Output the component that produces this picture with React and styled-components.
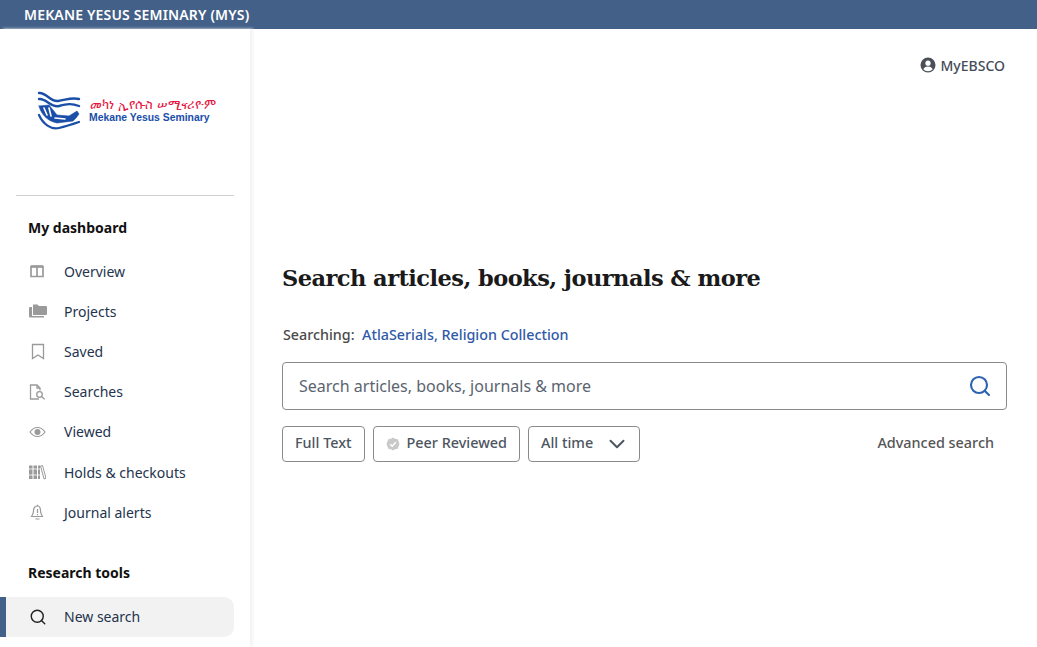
import React from "react";
import styled, { createGlobalStyle } from "styled-components";
import { Search, ChevronDown } from "lucide-react";

const Global = createGlobalStyle`
  html, body { margin: 0; padding: 0; height: 100%; overflow: hidden; background: #fff; }
  * { box-sizing: border-box; }
  body { font-family: "Noto Sans", "Open Sans", sans-serif; color: #1a1a1a; }
`;
const Page = styled.div`display: flex; flex-direction: column; width: 1037px; height: 647px; overflow: hidden;`;
const TopBar = styled.header`
  height: 29px; flex: none; background: #436088; color: #fff; font-size: 14px; font-weight: 600;
  line-height: 29px; padding-left: 24px; letter-spacing: 0.16px;
`;
const Body = styled.div`display: flex; flex: 1; min-height: 0;`;
const Sidebar = styled.aside`
  width: 250px; flex: none; background: #fff; box-shadow: 3px 0 3px #f3f3f3;
`;
const LogoBox = styled.div`
  margin: 0 16px; height: 167px; border-bottom: 1px solid #d2d2d2; padding: 62px 0 0 21px;
`;
const LogoRow = styled.div`display: flex; align-items: center; gap: 8px;`;
const LogoText = styled.div`display: flex; flex-direction: column; align-items: flex-start; margin-top: -2px;`;
const Amharic = styled.span`
  color: #e5173f; font-family: "DejaVu Sans", "Noto Sans", sans-serif; font-size: 12.7px; line-height: 15px; margin-left: 1px; white-space: nowrap;
`;
const Latin = styled.span`
  color: #1a4ea8; font-family: "Liberation Sans", sans-serif; font-weight: 700; font-size: 10.4px; line-height: 12px; white-space: nowrap;
`;
const SectionTitle = styled.h2`
  margin: 0; font-size: 14px; font-weight: 700; line-height: 20px; padding-left: 28px; color: #111;
  margin-top: ${p => p.$top}px;
`;
const NavList = styled.nav`display: flex; flex-direction: column; margin-top: ${p => p.$top}px;`;
const NavItem = styled.a`
  display: flex; align-items: center; height: 40.2px; font-size: 14px; color: #24344d; padding-left: 28px;
`;
const ActiveItem = styled.a`
  display: flex; align-items: center; height: 40px; width: 234px; font-size: 14px; color: #24344d;
  background: #f2f2f2; border-left: 6px solid #436088; border-radius: 0 10px 10px 0; padding-left: 22px;
`;
const NavIcon = styled.span`
  width: 36px; flex: none; display: flex; align-items: center; padding-left: 1px; color: #9a9a9a;
  svg { display: block; }
`;
const ActiveIcon = styled(NavIcon)`color: #222;`;
const Main = styled.main`flex: 1; min-width: 0; padding: 0 30px 0 32px; display: flex; flex-direction: column;`;
const TopRight = styled.div`
  display: flex; justify-content: flex-end; align-items: center; gap: 5px; height: 20px; margin: 26px 2px 0 0;
  font-size: 14px; font-weight: 500; color: #444c5a; svg { display: block; }
`;
const Heading = styled.h1`
  margin: 187px 0 0; font-family: "DejaVu Serif", "Liberation Serif", serif; font-size: 22.5px; font-weight: 700;
  line-height: 32px; color: #1a1a1a; letter-spacing: -0.54px; white-space: nowrap;
`;
const Scope = styled.div`
  display: flex; gap: 7.5px; margin: 31px 0 0 1px; font-size: 14.3px; line-height: 20px; font-weight: 500; color: #4a4a4a;
`;
const ScopeLink = styled.a`color: #2f5aa8;`;
const SearchBox = styled.div`
  display: flex; align-items: center; justify-content: space-between; height: 48px; margin-top: 17px;
  border: 1px solid #8a8a8a; border-radius: 4px; padding: 0 14px 0 16px; font-size: 16px; color: #5b6470;
  svg { display: block; color: #2b63b0; }
`;
const FilterRow = styled.div`display: flex; align-items: center; gap: 8px; margin-top: 16px;`;
const Chip = styled.button`
  display: flex; align-items: center; height: 36px; padding: 0 12px 3px; background: #fff;
  border: 1px solid #8a8a8a; border-radius: 4px; font: 500 14.4px "Noto Sans", sans-serif; color: #4d5561;
`;
const ChipBadge = styled.svg`margin: 3px 7px 0 0; flex: none;`;
const ChipChevron = styled(ChevronDown)`margin: 3px -3px 0 11px; flex: none;`;
const Advanced = styled.a`margin: 0 13px 3px auto; font-size: 14.4px; font-weight: 500; color: #555;`;

const Logo = () => (
  <svg width="44" height="40" viewBox="0 0 44 40" fill="none" stroke="#1a4ea8" strokeLinecap="round">
    <path d="M2 2C9 1 13 11 21 10S34 6 42 8" strokeWidth="2.4" />
    <path d="M2 8C9 7 14 17 22 15S34 12 42 15" strokeWidth="2.4" />
    <path d="M2 15L12 14L20 24L32 25L40 20L42 23L39 27L36 30L20 32C10 30 4 23 2 15Z" fill="#1a4ea8" strokeWidth="0.6" />
    <path d="M7 17l3 7M12 17l2 8M18 27l10 1" stroke="#fff" strokeWidth="1.6" />
    <path d="M2 24C6 33 14 39 22 37S36 33 42 31" strokeWidth="2.2" />
  </svg>
);

const items = [
  ["Overview", <svg width="16" height="16" viewBox="0 0 16 16" fill="none" stroke="currentColor" strokeWidth="1.7"><path d="M2 3.500h12v10H2zM8 3.500v10" /><path d="M2 3.500h12" strokeWidth="2.600" /></svg>],
  ["Projects", <svg width="18" height="16" viewBox="0 0 18 16" fill="currentColor"><path d="M4 1.500h4.500L10 3h7a1 1 0 0 1 1 1v7a1 1 0 0 1-1 1H4z" /><path d="M0 5a1 1 0 0 1 1-1h2v9h12v1.500H1a1 1 0 0 1-1-1z" /></svg>],
  ["Saved", <svg width="16" height="17" viewBox="0 0 16 17" fill="none" stroke="currentColor" strokeWidth="1.300" style={{ marginLeft: 1 }}><path d="M2.500 1.500h11v14L8 12l-5.500 3.500z" /></svg>],
  ["Searches", <svg width="17" height="16" viewBox="0 0 17 16" fill="none" stroke="currentColor" strokeWidth="1.300"><path d="M10 15H1.500V1h6.500l3 3v2.500" /><path d="M8 1v3h3" /><circle cx="10.500" cy="10.500" r="2.800" /><path d="M12.700 12.700l3 2.500" /></svg>],
  ["Viewed", <svg width="17" height="16" viewBox="0 0 17 16" fill="none"><path d="M1 8c2-3 4.500-4.500 7.500-4.500S14 5 16 8c-2 3-4.500 4.500-7.500 4.500S3 11 1 8z" stroke="currentColor" strokeWidth="1.200" /><circle cx="8.500" cy="8" r="3" fill="currentColor" /></svg>],
  ["Holds & checkouts", <svg width="17" height="16" viewBox="0 0 17 16" fill="currentColor"><path d="M0 1.500h3.500V15H0zM4.500 1.500H8V15H4.500zM9 1.500h2V15H9z" /><path d="M11.500 2l2-.5 3.500 12.800-2 .6z" fill="none" stroke="currentColor" /><path d="M0 5h11M0 11h11" stroke="#fff" strokeWidth=".8" /></svg>],
  ["Journal alerts", <svg width="16" height="17" viewBox="0 0 16 17" fill="none" stroke="currentColor" strokeWidth="1.200" style={{ marginLeft: 1 }}><path d="M7.500 2c-3 0-4 2.500-4 5 0 2.500-1 3.500-2 5.500h11c-1-2-2-3-2-5.500 0-2.500-1-5-3-5z" /><path d="M5.500 15h4M7.500.8v1.200M7.500 5v4M7.500 10v1.200" /></svg>],
];

export default function App() {
  return (
    <Page>
      <Global />
      <TopBar>MEKANE YESUS SEMINARY (MYS)</TopBar>
      <Body>
        <Sidebar>
          <LogoBox>
            <LogoRow>
              <Logo />
              <LogoText>
                <Amharic>መካነ ኢየሱስ ሠሚናሪዮም</Amharic>
                <Latin>Mekane Yesus Seminary</Latin>
              </LogoText>
            </LogoRow>
          </LogoBox>
          <SectionTitle $top={22}>My dashboard</SectionTitle>
          <NavList $top={13}>
            {items.map(([label, icon]) => (
              <NavItem key={label}><NavIcon>{icon}</NavIcon>{label}</NavItem>
            ))}
          </NavList>
          <SectionTitle $top={30.600}>Research tools</SectionTitle>
          <NavList $top={14}>
            <ActiveItem><ActiveIcon><Search size={18} strokeWidth={1.9} /></ActiveIcon>New search</ActiveItem>
          </NavList>
        </Sidebar>
        <Main>
          <TopRight>
            <svg width="16" height="16" viewBox="0 0 16 16"><circle cx="8" cy="8" r="7.500" fill="#4b4f57" /><circle cx="8" cy="6.200" r="2.600" fill="#fff" /><path d="M3.300 12.200c1-2 2.800-2.700 4.700-2.700s3.700.7 4.700 2.700A6 6 0 0 1 8 14.300a6 6 0 0 1-4.700-2.100z" fill="#fff" /></svg>
            MyEBSCO
          </TopRight>
          <Heading>Search articles, books, journals &amp; more</Heading>
          <Scope>Searching: <ScopeLink>AtlaSerials, Religion Collection</ScopeLink></Scope>
          <SearchBox>Search articles, books, journals &amp; more<Search size={24} strokeWidth={2.1} /></SearchBox>
          <FilterRow>
            <Chip>Full Text</Chip>
            <Chip>
              <ChipBadge width="14" height="14" viewBox="0 0 14 14"><path d="M7 .5l2 1.200 2.400.2 1 2.100L13.500 7l-1.100 3-1 2.100-2.400.2-2 1.200-2-1.200-2.400-.2-1-2.100L.5 7l1.100-3 1-2.100 2.400-.2z" fill="#c9c9c9" /><path d="M4.200 7.200l2 2 3.600-4" stroke="#fff" strokeWidth="1.500" fill="none" /></ChipBadge>
              Peer Reviewed
            </Chip>
            <Chip>All time<ChipChevron size={26} strokeWidth={1.8} /></Chip>
            <Advanced>Advanced search</Advanced>
          </FilterRow>
        </Main>
      </Body>
    </Page>
  );
}
